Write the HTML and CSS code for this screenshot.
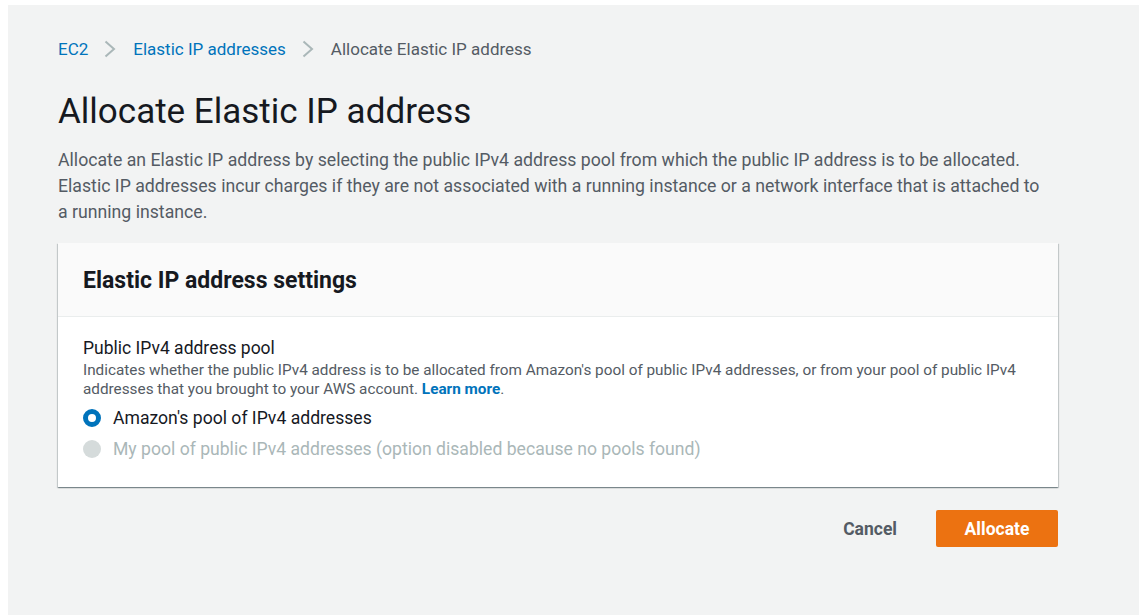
FILE: index.html
```html
<!DOCTYPE html>
<html>
<head>
<meta charset="utf-8">
<link rel="stylesheet" href="styles.css">
</head>
<body>
<div class="page">
  <nav class="breadcrumb">
    <a class="crumb-link" href="#">EC2</a>
    <svg class="chev" width="12" height="18" viewBox="0 0 12 18"><path d="M1.5 1.5 L10 9 L1.5 16.5" fill="none" stroke="#aab7b8" stroke-width="2"/></svg>
    <a class="crumb-link" href="#">Elastic IP addresses</a>
    <svg class="chev" width="12" height="18" viewBox="0 0 12 18"><path d="M1.5 1.5 L10 9 L1.5 16.5" fill="none" stroke="#aab7b8" stroke-width="2"/></svg>
    <span class="crumb-current">Allocate Elastic IP address</span>
  </nav>
  <h1 class="title">Allocate Elastic IP address</h1>
  <p class="intro">Allocate an Elastic IP address by selecting the public IPv4 address pool from which the public IP address is to be allocated. Elastic IP addresses incur charges if they are not associated with a running instance or a network interface that is attached to a running instance.</p>
  <section class="panel">
    <div class="panel-header"><h2>Elastic IP address settings</h2></div>
    <div class="panel-body">
      <div class="field-label">Public IPv4 address pool</div>
      <div class="field-desc">Indicates whether the public IPv4 address is to be allocated from Amazon's pool of public IPv4 addresses, or from your pool of public IPv4 addresses that you brought to your AWS account. <a href="#" class="learn">Learn more</a>.</div>
      <div class="radio-list">
        <div class="radio-row">
          <span class="radio checked"></span>
          <span class="radio-label">Amazon's pool of IPv4 addresses</span>
        </div>
        <div class="radio-row disabled">
          <span class="radio off"></span>
          <span class="radio-label">My pool of public IPv4 addresses (option disabled because no pools found)</span>
        </div>
      </div>
    </div>
  </section>
  <div class="actions">
    <button class="btn-cancel">Cancel</button>
    <button class="btn-primary">Allocate</button>
  </div>
</div>
</body>
</html>
```
FILE: styles.css
```css
html, body {
  margin: 0;
  padding: 0;
  background: #ffffff;
}
body {
  padding: 5px 0 0 8px;
  font-family: Roboto, "Liberation Sans", sans-serif;
  color: #16191f;
}
.page {
  background: #f2f3f3;
  min-height: 610px;
  padding: 0 81px 0 50px;
  box-sizing: border-box;
}
.breadcrumb {
  display: flex;
  align-items: center;
  padding-top: 32px;
  height: 24px;
  font-size: 17px;
  line-height: 24px;
}
.crumb-link {
  color: #0073bb;
  text-decoration: none;
}
.crumb-current {
  color: #545b64;
}
.chev {
  margin: 0 17px 0 16px;
}
.title {
  margin: 29px 0 0 0;
  font-size: 35px;
  font-weight: 400;
  line-height: 44px;
}
.intro {
  margin: 13px 0 0 0;
  max-width: 990px;
  font-size: 17.7px;
  line-height: 26px;
  color: #545b64;
}
.panel {
  margin-top: 18px;
  background: #fff;
  box-shadow: 0 1px 1px 0 rgba(0,28,36,.3), 1px 1px 1px 0 rgba(0,28,36,.15), -1px 1px 1px 0 rgba(0,28,36,.15);
}
.panel-header {
  background: #fafafa;
  border-bottom: 1px solid #eaeded;
  padding: 24px 25px 21px 25px;
}
.panel-header h2 {
  margin: 0;
  font-size: 23px;
  font-weight: 700;
  line-height: 28px;
}
.panel-body {
  padding: 20px 25px 23px 25px;
}
.field-label {
  font-size: 17.5px;
  line-height: 22px;
}
.field-desc {
  margin-top: 2px;
  font-size: 15.3px;
  line-height: 19px;
  color: #545b64;
}
.learn {
  color: #0073bb;
  font-weight: 700;
  text-decoration: none;
}
.radio-list {
  margin-top: 3px;
}
.radio-row {
  display: flex;
  align-items: center;
  gap: 12px;
  height: 31px;
  font-size: 17.6px;
}
.radio-row.disabled {
  color: #aab7b8;
}
.radio {
  width: 18px;
  height: 18px;
  border-radius: 50%;
  box-sizing: border-box;
  flex: none;
}
.radio.checked {
  border: 5.5px solid #0073bb;
  background: #fff;
}
.radio.off {
  background: #d5dbdb;
}
.actions {
  display: flex;
  justify-content: flex-end;
  align-items: center;
  gap: 39px;
  margin-top: 23px;
}
.btn-cancel {
  border: none;
  background: none;
  font-family: inherit;
  font-size: 17.5px;
  font-weight: 700;
  color: #545b64;
  padding: 0;
}
.btn-primary {
  border: none;
  background: #ec7211;
  color: #fff;
  font-family: inherit;
  font-size: 17.5px;
  font-weight: 700;
  border-radius: 2px;
  width: 122px;
  height: 37px;
}
```
